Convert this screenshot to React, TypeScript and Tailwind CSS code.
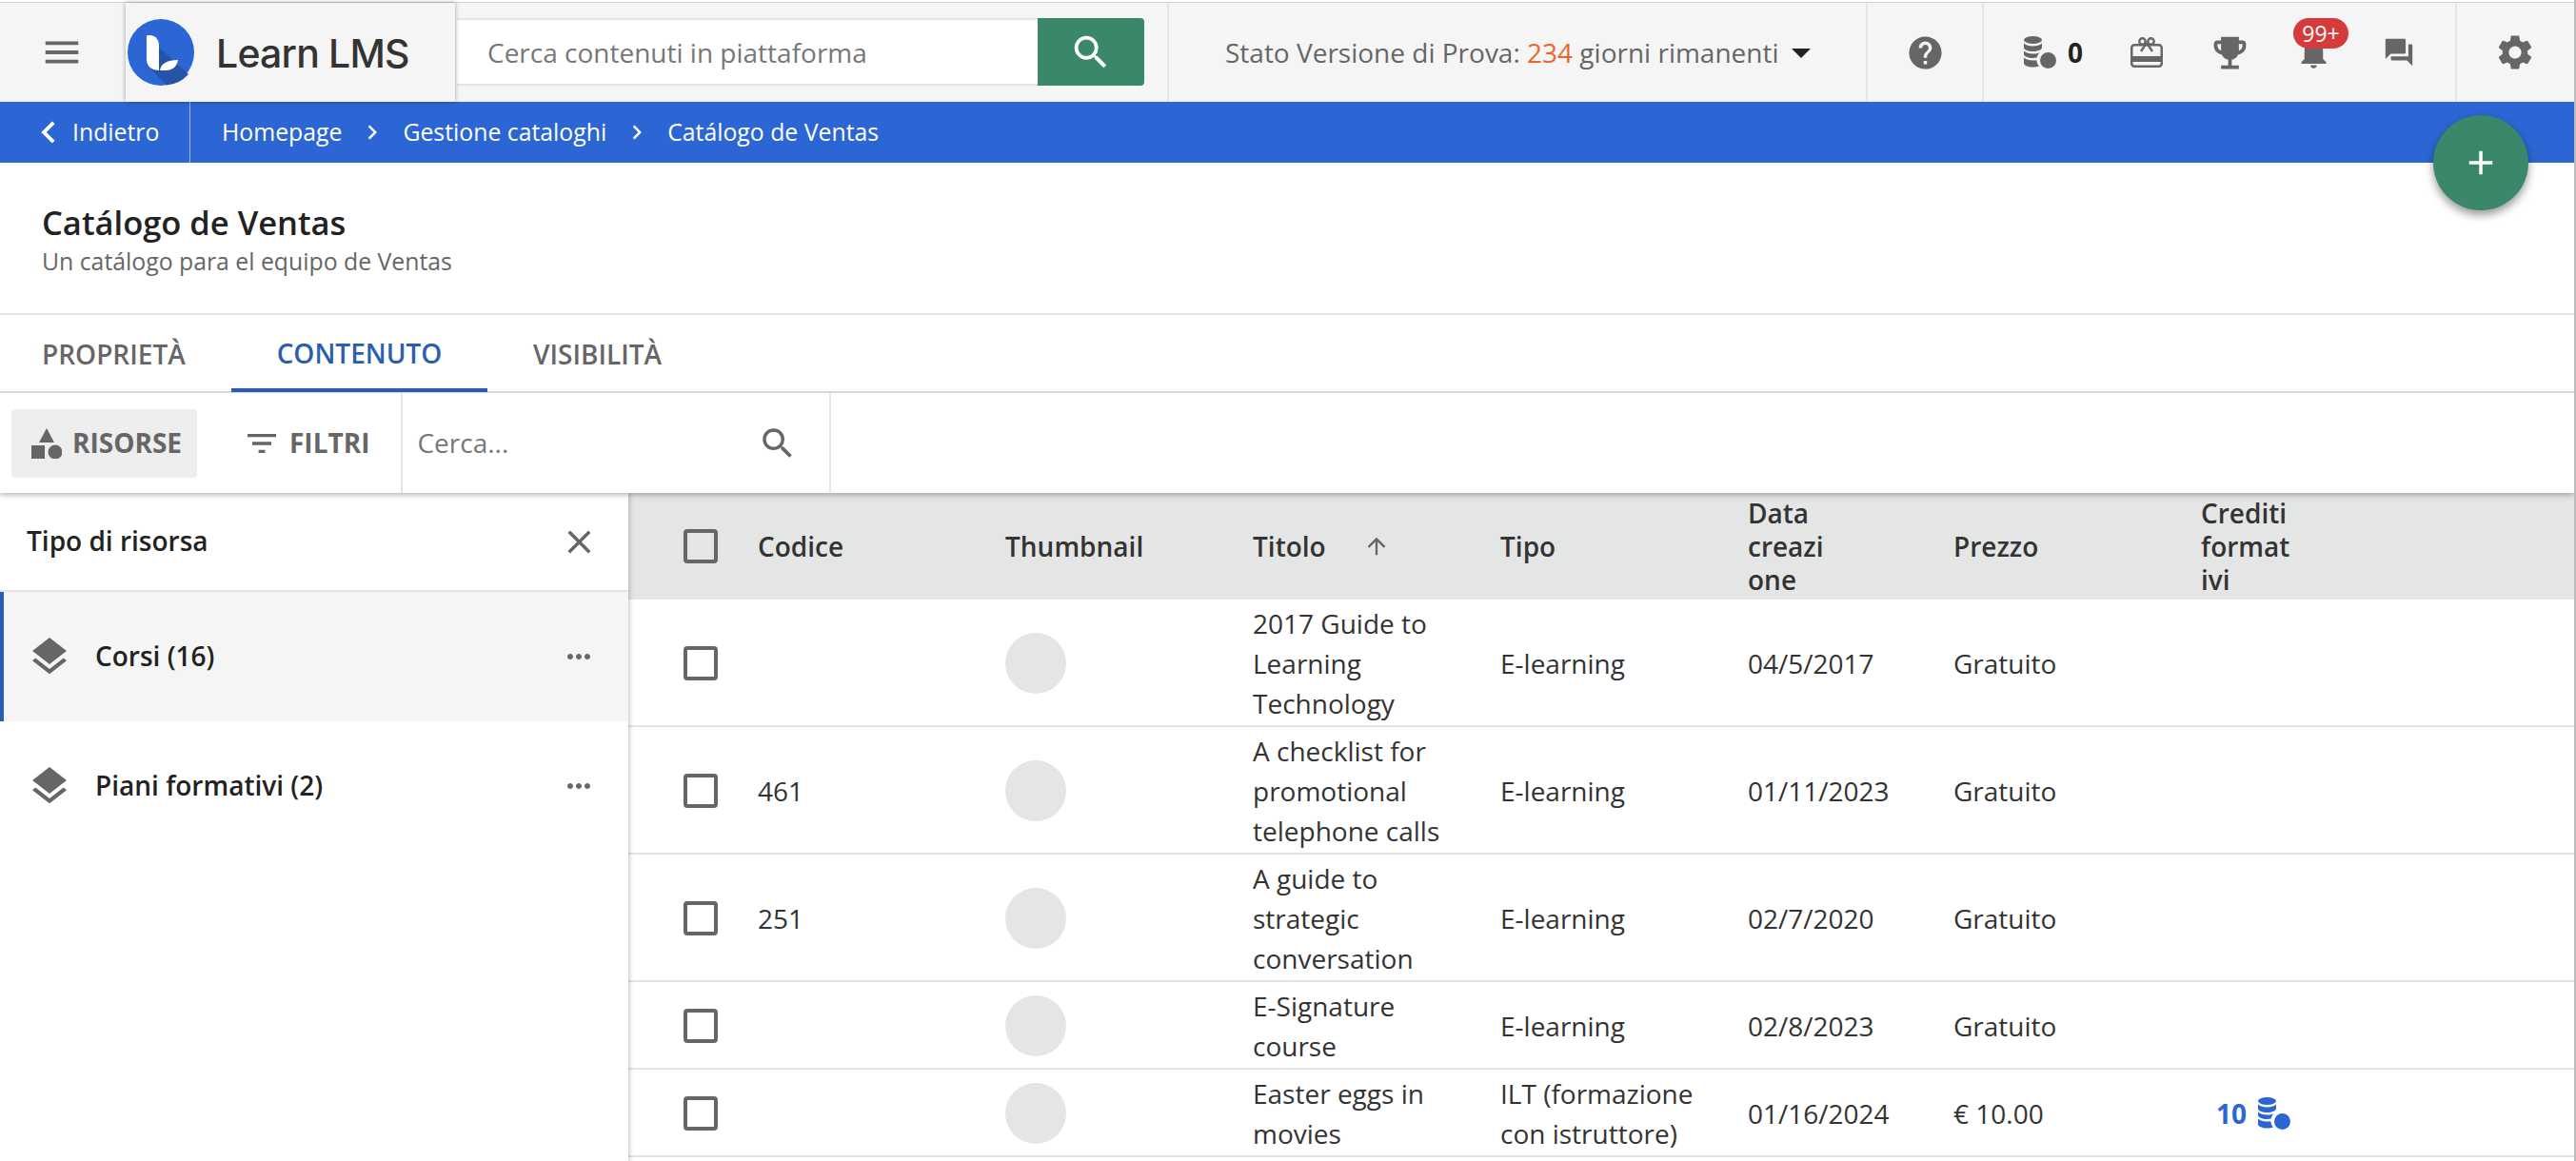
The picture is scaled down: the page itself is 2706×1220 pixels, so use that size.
import {
  MdAdd,
  MdArrowDropDown,
  MdArrowUpward,
  MdChevronLeft,
  MdChevronRight,
  MdClose,
  MdEmojiEvents,
  MdFilterList,
  MdForum,
  MdHelp,
  MdLayers,
  MdMenu,
  MdMoreHoriz,
  MdNotifications,
  MdSearch,
  MdSettings,
} from "react-icons/md";

const rows = [
  { code: "", title: "2017 Guide to Learning Technology", type: "E-learning", date: "04/5/2017", price: "Gratuito" },
  { code: "461", title: "A checklist for promotional telephone calls", type: "E-learning", date: "01/11/2023", price: "Gratuito" },
  { code: "251", title: "A guide to strategic conversation", type: "E-learning", date: "02/7/2020", price: "Gratuito" },
  { code: "", title: "E-Signature course", type: "E-learning", date: "02/8/2023", price: "Gratuito" },
  { code: "", title: "Easter eggs in movies", type: "ILT (formazione con istruttore)", date: "01/16/2024", price: "€ 10.00", credits: "10" },
];

const gridCols = "grid grid-cols-[136px_260px_260px_260px_260px_216px_260px_1fr] items-center";

const Coins = ({ className }: { className: string }) => (
  <svg viewBox="0 0 34 34" className={className} fill="currentColor">
    <ellipse cx="9.500" cy="4" rx="9.500" ry="4" />
    <path d="M0 7.500c2 2 5.500 3 9.500 3s7.500-1 9.500-3v4.500c0 2.300-4.300 4-9.500 4S0 14.300 0 12z" />
    <path d="M0 15.500c2 2 5.500 3 9.500 3 2.800 0 5.500-.5 7.500-1.500-1.500 1.200-2.800 3-3.300 5.500-1.300.3-2.700.5-4.200.5C4.300 23 0 21.300 0 19z" />
    <path d="M0 22.500c2 2 5.500 3 9.500 3 1.300 0 2.700-.1 3.900-.3.100 2.300 1 4.500 2.500 6.200-1.800.7-4 1.100-6.400 1.100C4.300 32.500 0 30.800 0 28.500z" />
    <circle cx="25.500" cy="25.500" r="8.500" />
  </svg>
);

const Gift = () => (
  <svg viewBox="0 0 34 32" className="w-[34px] h-[32px] text-[#666]" fill="none" stroke="currentColor">
    <circle cx="12.500" cy="4.500" r="3.200" strokeWidth="2.400" />
    <circle cx="21.500" cy="4.500" r="3.200" strokeWidth="2.400" />
    <path d="M17 6 L11 15 M17 6 L23 15" strokeWidth="2.400" />
    <rect x="1.250" y="8.250" width="31.500" height="22.500" rx="3" strokeWidth="2.500" />
    <rect x="1" y="20" width="32" height="6" fill="currentColor" stroke="none" />
  </svg>
);

const Logo = () => (
  <svg viewBox="0 0 70 70" className="w-[70px] h-[70px] shrink-0">
    <circle cx="35" cy="35" r="35" fill="#2b66d4" />
    <path d="M20 18 L64 58 A35 35 0 0 1 41 69.500 L20 48z" fill="#2453a8" />
    <path d="M21 17h3c6 1 9 5 9 11v26c-7 0-13-4-13-11V18z" fill="#fff" />
    <path d="M34 54c1-7 7-11 19-11-1 7-6 11-13 11z" fill="#fff" />
  </svg>
);

const ShapesIcon = () => (
  <svg viewBox="0 0 32 32" className="w-[32px] h-[32px] text-[#666]" fill="currentColor">
    <path d="M16 0 L24 15 H8z" />
    <rect x="0" y="18" width="14" height="14" />
    <circle cx="25" cy="25" r="7.500" />
  </svg>
);

const Checkbox = () => (
  <div className="ml-[58px] w-[36px] h-[36px] rounded-[4px] border-[4px] border-[#666]" />
);

const TopIcons = () => (
  <div className="flex items-center h-full">
    <div className="w-[122px] h-full border-l-2 border-[#e6e6e6] flex items-center justify-center">
      <MdHelp className="w-[41px] h-[41px] text-[#666]" />
    </div>
    <div className="relative w-[499px] h-full border-x-2 border-[#e6e6e6] flex items-center">
      <Coins className="ml-[42px] w-[34px] h-[34px] text-[#666]" />
      <span className="ml-[12px] text-[28px] font-bold text-[#222]">0</span>
      <div className="ml-[50px]"><Gift /></div>
      <MdEmojiEvents className="ml-[48px] w-[45px] h-[45px] text-[#666]" />
      <MdNotifications className="ml-[46px] w-[39px] h-[39px] text-[#666]" />
      <MdForum className="ml-[53px] w-[34px] h-[34px] text-[#666]" />
      <span className="absolute left-[325px] top-[16px] h-[32px] w-[58px] rounded-full bg-[#d63b3b] text-white text-[23px] leading-[32px] text-center">99+</span>
    </div>
    <div className="w-[122px] h-full flex items-center justify-center">
      <MdSettings className="w-[44px] h-[44px] text-[#666]" />
    </div>
  </div>
);

const Header = () => (
  <header className="h-[105px] bg-[#f5f5f5] border-t border-[#d2d2d2] flex">
    <div className="w-[130px] flex items-center justify-center">
      <MdMenu className="w-[46px] h-[46px] text-[#666]" />
    </div>
    <div className="ml-[2px] w-[346px] flex items-center pl-[2px] bg-[#f5f5f5] shadow-[0_0_5px_rgba(0,0,0,0.35)] relative z-10">
      <Logo />
      <span className="ml-[23px] mt-[3px] font-['Inter',sans-serif] text-[41px] font-medium tracking-[-0.8px] text-[#333]">Learn LMS</span>
    </div>
    <div className="ml-[2px] mt-[16px] h-[71px] flex">
      <div className="w-[610px] bg-white border-y-2 border-[#e4e4e4] pl-[32px] flex items-center text-[28px] text-[#777]">
        Cerca contenuti in piattaforma
      </div>
      <div className="w-[112px] bg-[#3a876a] rounded-r-[4px] flex items-center justify-center">
        <MdSearch className="w-[46px] h-[46px] text-white" />
      </div>
    </div>
    <div className="ml-[24px] w-[734px] border-l-2 border-[#e6e6e6] flex items-center pl-[59px] text-[28px] text-[#666]">
      <span>Stato Versione di Prova: <span className="text-[#e8682c]">234</span> giorni rimanenti</span>
      <MdArrowDropDown className="-ml-[1px] w-[48px] h-[48px] text-[#222]" />
    </div>
    <TopIcons />
  </header>
);

const Breadcrumb = () => (
  <nav className="h-[64px] bg-[#2b66d4] flex items-center text-white text-[24.800px] font-medium">
    <div className="w-[200px] h-full flex items-center pl-[28px] border-r border-[#9db9ea]">
      <MdChevronLeft className="w-[46px] h-[46px] mr-[2px]" />
      <span>Indietro</span>
    </div>
    <span className="ml-[33px]">Homepage</span>
    <MdChevronRight className="mx-[17px] w-[30px] h-[30px]" />
    <span>Gestione cataloghi</span>
    <MdChevronRight className="mx-[17px] w-[30px] h-[30px]" />
    <span>Catálogo de Ventas</span>
  </nav>
);

const Tabs = () => (
  <div className="h-[82px] border-b-2 border-[#e4e4e4] flex pl-[44px] text-[28px] font-semibold text-[#666]">
    <div className="flex items-center w-[199px] pt-[2px]">PROPRIETÀ</div>
    <div className="flex items-center justify-center w-[269px] pt-[2px] text-[#2b5fae] border-b-[4px] border-[#2b5fae] -mb-[1px]">CONTENUTO</div>
    <div className="flex items-center ml-[48px] pt-[2px]">VISIBILITÀ</div>
  </div>
);

const Toolbar = () => (
  <div className="relative z-20 h-[105px] flex items-center bg-white shadow-[0_2px_6px_rgba(0,0,0,0.3)]">
    <div className="ml-[12px] w-[195px] h-[72px] bg-[#eeeeee] rounded-[4px] flex items-center pl-[21px]">
      <ShapesIcon />
      <span className="ml-[11px] pb-[2px] text-[28px] font-bold text-[#666]">RISORSE</span>
    </div>
    <div className="ml-[48px] flex items-center">
      <MdFilterList className="w-[40px] h-[40px] text-[#666]" />
      <span className="ml-[9px] pb-[2px] text-[28px] font-bold text-[#666]">FILTRI</span>
    </div>
    <div className="ml-[33px] w-[452px] h-full border-x-2 border-[#e6e6e6] flex items-center justify-between pl-[15px] pr-[33px]">
      <span className="pb-[2px] text-[28px] text-[#777]">Cerca...</span>
      <MdSearch className="w-[42px] h-[42px] text-[#666]" />
    </div>
  </div>
);

const SideItem = ({ label, active }: { label: string; active?: boolean }) => (
  <div className={active ? "h-[136px] flex items-center bg-[#f5f5f5] border-l-[4px] border-[#2b5fae] pl-[24px] pr-[34px]" : "h-[136px] flex items-center border-l-[4px] border-transparent pl-[24px] pr-[34px]"}>
    <MdLayers className="w-[48px] h-[48px] text-[#666]" />
    <span className="ml-[24px] pb-[2px] flex-1 text-[28px] font-semibold text-[#222]">{label}</span>
    <MdMoreHoriz className="w-[36px] h-[36px] text-[#666]" />
  </div>
);

const Sidebar = () => (
  <aside className="relative z-10 w-[660px] shrink-0 bg-white shadow-[1px_0_5px_rgba(0,0,0,0.25)]">
    <div className="h-[104px] border-b-2 border-[#e4e4e4] flex items-center justify-between pl-[28px] pr-[31px]">
      <span className="pb-[2px] text-[28px] font-semibold text-[#222]">Tipo di risorsa</span>
      <MdClose className="w-[41px] h-[41px] text-[#666]" />
    </div>
    <SideItem label="Corsi (16)" active />
    <SideItem label="Piani formativi (2)" />
  </aside>
);

const ResourceTable = () => (
  <div className="flex-1">
    <div className={`${gridCols} h-[112px] bg-[#e4e6e5] text-[28px] leading-[35px] font-semibold text-[#333]`}>
      <Checkbox />
      <div>Codice</div>
      <div>Thumbnail</div>
      <div className="flex items-center">
        Titolo
        <MdArrowUpward className="ml-[39px] w-[28px] h-[28px] text-[#666]" />
      </div>
      <div>Tipo</div>
      <div className="w-[84px] break-words">Data creazione</div>
      <div>Prezzo</div>
      <div className="w-[96px] break-words">Crediti formativi</div>
    </div>
    {rows.map((row) => (
      <div key={row.title} className={`${gridCols} pt-[4px] pb-[2px] border-b-2 border-[#e4e4e4] text-[28px] leading-[42px] text-[#333]`}>
        <Checkbox />
        <div>{row.code}</div>
        <div className="w-[64px] h-[64px] rounded-full bg-[#e4e6e5]" />
        <div className="pr-[35px]">{row.title}</div>
        <div className="pr-[35px]">{row.type}</div>
        <div>{row.date}</div>
        <div>{row.price}</div>
        {row.credits ? (
          <div className="flex items-center pl-[16px] text-[#2b66d4]">
            <span className="font-bold">{row.credits}</span>
            <Coins className="ml-[12px] w-[34px] h-[34px]" />
          </div>
        ) : (
          <div />
        )}
      </div>
    ))}
  </div>
);

export default function App() {
  return (
    <div className="relative w-[2706px] h-[1220px] overflow-hidden bg-white border-r-2 border-[#bcbcbc] font-['Open_Sans',sans-serif]">
      <div className="h-[2px]" />
      <Header />
      <Breadcrumb />
      <div className="h-[160px] border-b-2 border-[#e4e4e4] pl-[44px] pt-[39px]">
        <h1 className="text-[34.500px] leading-[48px] font-semibold text-[#222]">Catálogo de Ventas</h1>
        <p className="text-[24.800px] leading-[32px] font-medium text-[#666]">Un catálogo para el equipo de Ventas</p>
      </div>
      <Tabs />
      <Toolbar />
      <div className="flex h-[703px]">
        <Sidebar />
        <ResourceTable />
      </div>
      <button className="absolute left-[2556px] top-[121px] w-[100px] h-[100px] rounded-full bg-[#3a876a] shadow-[0_5px_10px_rgba(0,0,0,0.4)] flex items-center justify-center">
        <MdAdd className="w-[42px] h-[42px] text-white" />
      </button>
    </div>
  );
}
